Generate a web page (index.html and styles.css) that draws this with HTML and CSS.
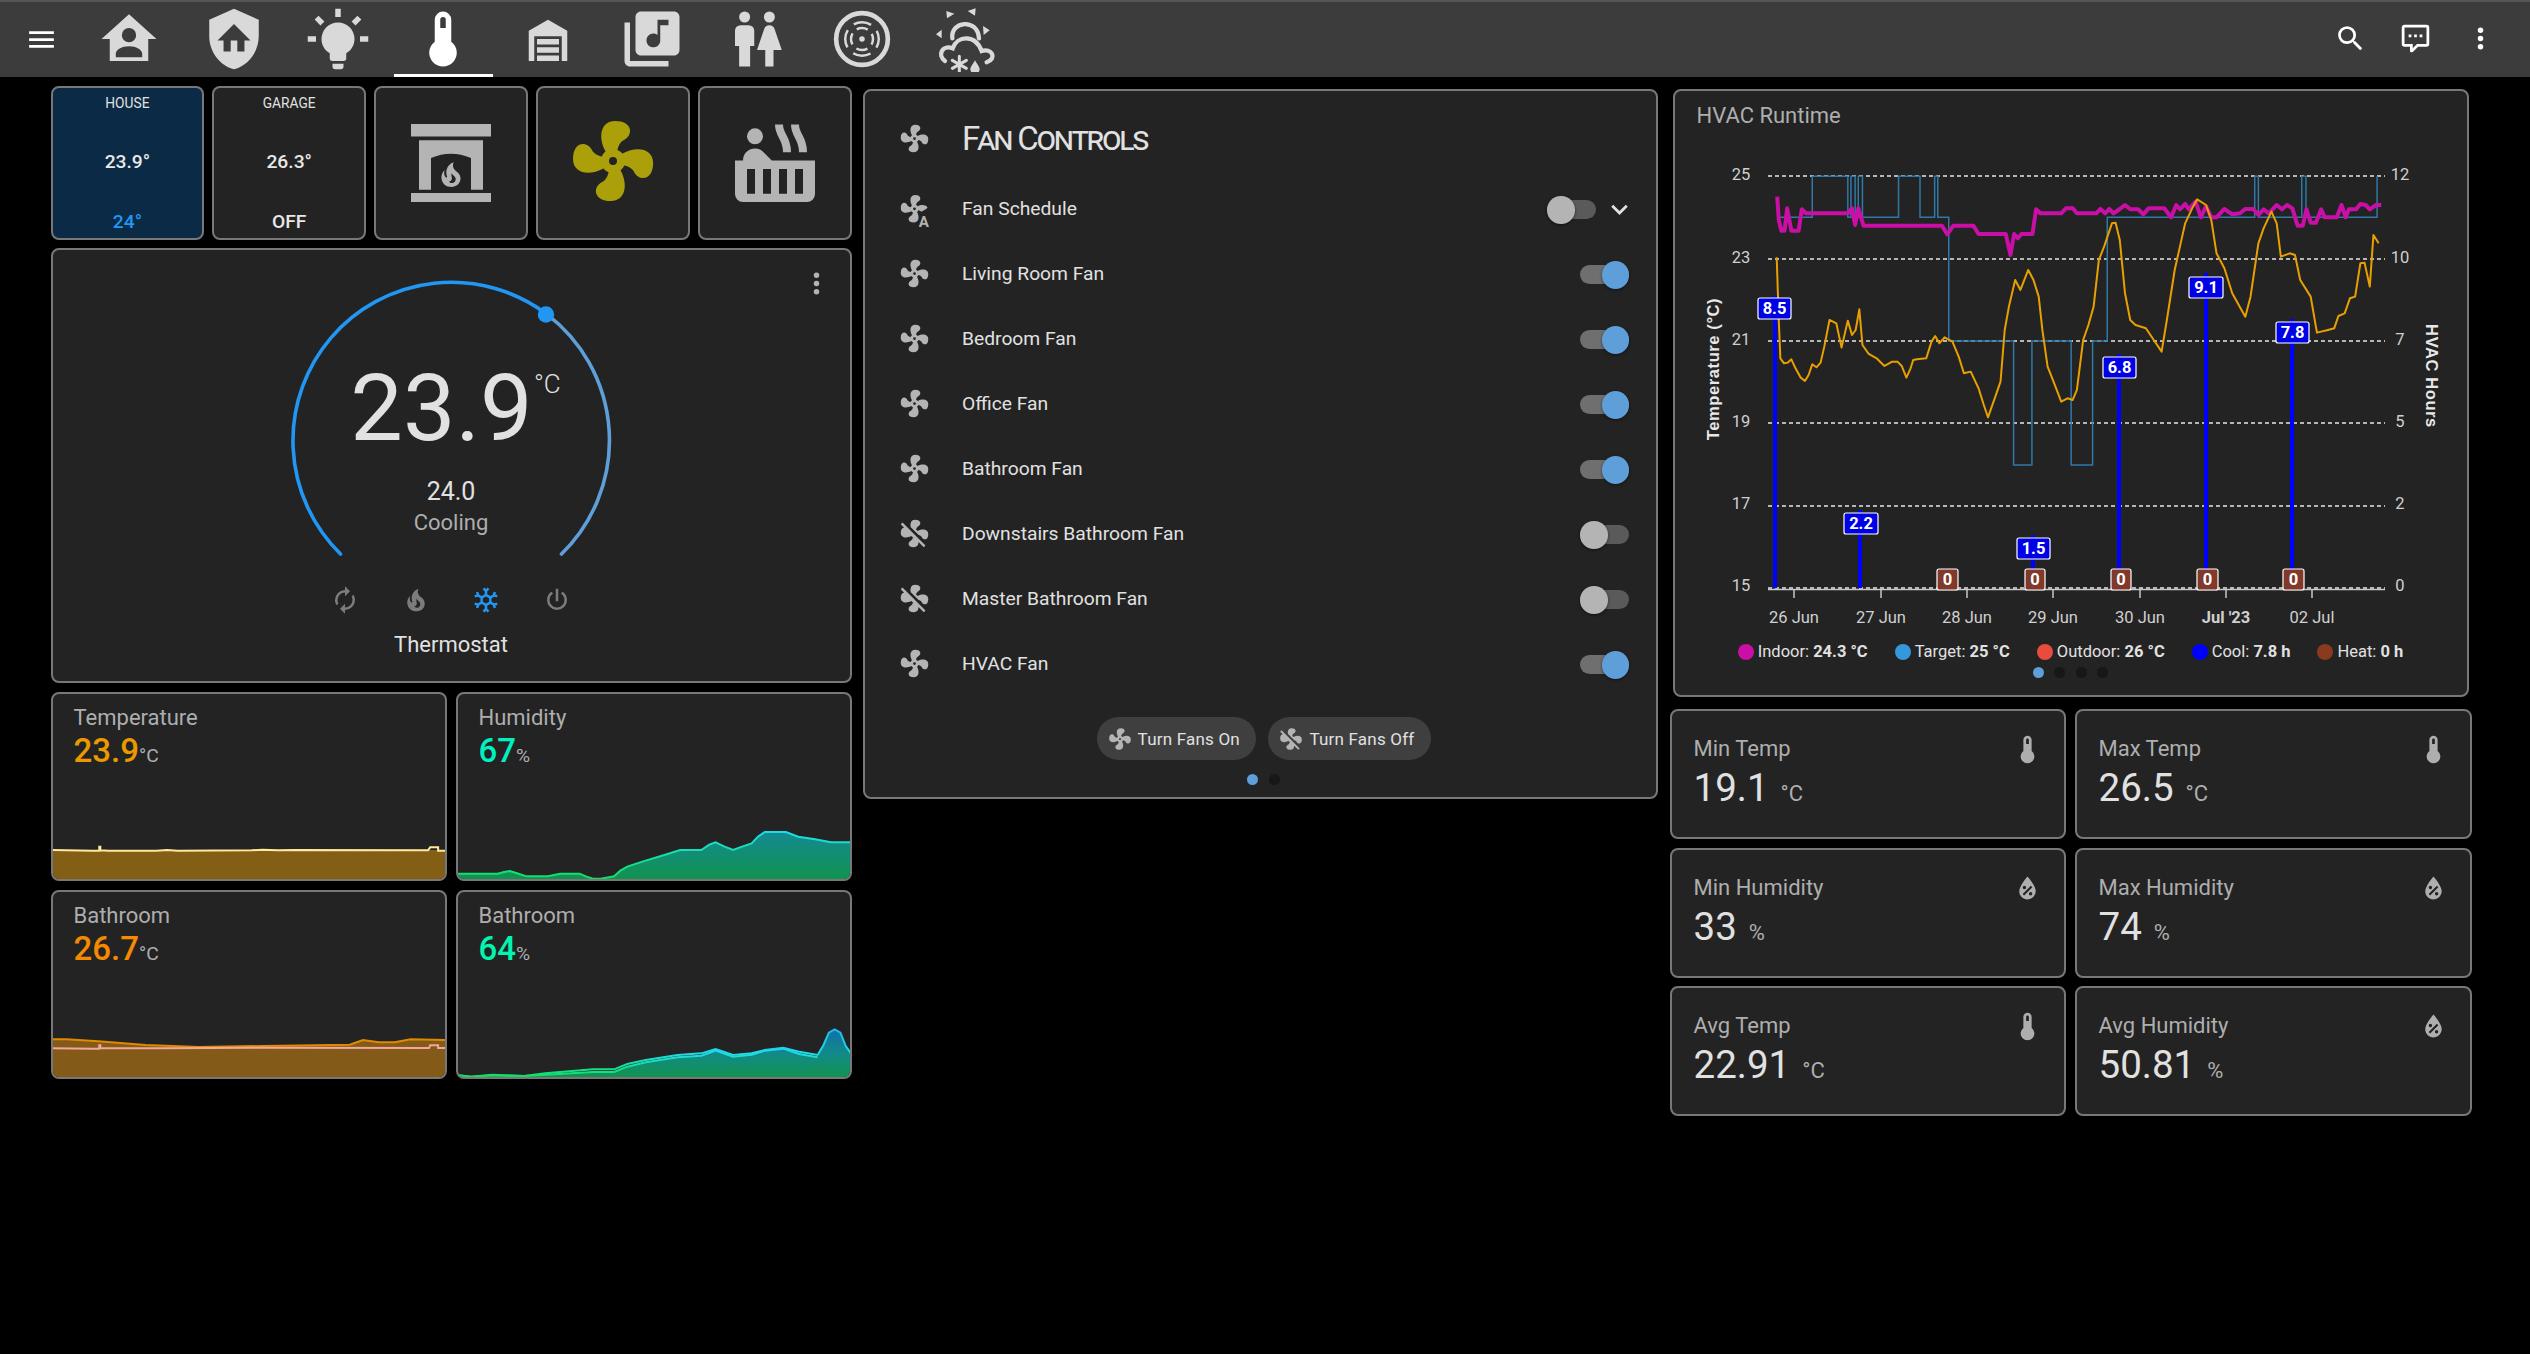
FILE: index.html
```html
<!DOCTYPE html>
<html lang="en">
<head>
  <meta charset="UTF-8">
  <title>Climate</title>
  <link rel="stylesheet" href="styles.css">
</head>
<body>

<!-- icon set -->
<svg class="defs" width="0" height="0">
  <symbol id="i-menu" viewBox="0 0 24 24"><path d="M3,6H21V8H3V6M3,11H21V13H3V11M3,16H21V18H3V16Z"/></symbol>
  <symbol id="i-home" viewBox="0 0 24 24"><path fill-rule="evenodd" d="M12,3L2,12H5V20H19V12H22L12,3M12,8A2.6,2.6 0 0,1 14.6,10.6A2.6,2.6 0 0,1 12,13.2A2.6,2.6 0 0,1 9.4,10.6A2.6,2.6 0 0,1 12,8M12,14.6C14.6,14.6 16.8,15.8 16.8,17.4V18.6H7.2V17.4C7.2,15.8 9.4,14.6 12,14.6Z"/></symbol>
  <symbol id="i-shield" viewBox="0 0 24 24"><path fill-rule="evenodd" d="M12,1L3,5V11C3,16.55 6.84,21.74 12,23C17.16,21.74 21,16.55 21,11V5L12,1M12,6.5L18,12.5H15.8V16.5H13.2V12.5H10.8V16.5H8.2V12.5H6L12,6.5Z"/></symbol>
  <symbol id="i-bulb" viewBox="0 0 24 24"><path d="M12,6A6,6 0 0,1 18,12C18,14.22 16.79,16.16 15,17.2V19A1,1 0 0,1 14,20H10A1,1 0 0,1 9,19V17.2C7.21,16.16 6,14.22 6,12A6,6 0 0,1 12,6M14,21V22A1,1 0 0,1 13,23H11A1,1 0 0,1 10,22V21H14M20,11H23V13H20V11M1,11H4V13H1V11M13,1V4H11V1H13M4.92,3.5L7.05,5.64L5.63,7.05L3.5,4.93L4.92,3.5M16.95,5.63L19.07,3.5L20.5,4.93L18.37,7.05L16.95,5.63Z"/></symbol>
  <symbol id="i-thermo" viewBox="0 0 24 24"><path fill-rule="evenodd" d="M15 13V5A3 3 0 0 0 9 5V13A5 5 0 1 0 15 13M12 4A1 1 0 0 1 13 5V8H11V5A1 1 0 0 1 12 4Z"/></symbol>
  <symbol id="i-garage" viewBox="0 0 24 24"><path d="M19,20H17V11H7V20H5V9L12,5L19,9V20M8,12H16V14H8V12M8,15H16V17H8V15M16,18V20H8V18H16Z"/></symbol>
  <symbol id="i-music" viewBox="0 0 24 24"><path d="M20 2H8C6.9 2 6 2.9 6 4V16C6 17.1 6.9 18 8 18H20C21.1 18 22 17.1 22 16V4C22 2.9 21.1 2 20 2M18 7H15V12.5C15 13.9 13.9 15 12.5 15S10 13.9 10 12.5 11.1 10 12.5 10C13.1 10 13.6 10.2 14 10.5V5H18V7M4 6H2V20C2 21.1 2.9 22 4 22H18V20H4V6Z"/></symbol>
  <symbol id="i-people" viewBox="0 0 24 24"><path d="M7.5,2A2,2 0 0,1 9.5,4A2,2 0 0,1 7.5,6A2,2 0 0,1 5.5,4A2,2 0 0,1 7.5,2M6,7H9A2,2 0 0,1 11,9V14.5H9.5V22H5.5V14.5H4V9A2,2 0 0,1 6,7M16.5,2A2,2 0 0,1 18.5,4A2,2 0 0,1 16.5,6A2,2 0 0,1 14.5,4A2,2 0 0,1 16.5,2M15,22V16H12L14.59,8.41C14.84,7.59 15.6,7 16.5,7C17.4,7 18.16,7.59 18.41,8.41L21,16H18V22H15Z"/></symbol>
  <symbol id="i-vacuum" viewBox="0 0 24 24">
    <g fill="none" stroke="currentColor">
      <circle cx="12" cy="12" r="9.4" stroke-width="1.7"/>
      <circle cx="12" cy="12" r="6.1" stroke-width=".9" stroke-dasharray="6.6 2.98" stroke-dashoffset="3.3"/>
      <circle cx="12" cy="12" r="4" stroke-width=".9" stroke-dasharray="4.2 2.08" stroke-dashoffset="2.1"/>
    </g>
    <circle cx="12" cy="12" r="1"/>
  </symbol>
  <symbol id="i-weather" viewBox="336 15 198 198">
    <g fill="none" stroke="currentColor" stroke-width="13" stroke-linecap="round">
      <path d="M394,112C388,60 470,50 474,112"/>
      <path d="M372,180C348,162 364,130 395,142C408,104 462,98 482,150C512,140 530,172 497,184"/>
    </g>
    <g fill="none" stroke="currentColor" stroke-width="9" stroke-linecap="round">
      <path d="M415,166V214M394,178L436,202M394,202L436,178"/>
    </g>
    <path d="M376,30L400,38L378,52ZM440,30L464,22L462,44ZM486,75L506,88L488,102ZM345,100L362,86L362,112Z"/>
    <path d="M462,178C470,192 476,198 476,205A14,13 0 0,1 448,205C448,198 454,192 462,178Z"/>
  </symbol>
  <symbol id="i-search" viewBox="0 0 24 24"><path d="M9.5,3A6.5,6.5 0 0,1 16,9.5C16,11.11 15.41,12.59 14.44,13.73L14.71,14H15.5L20.5,19L19,20.5L14,15.5V14.71L13.73,14.44C12.59,15.41 11.11,16 9.5,16A6.5,6.5 0 0,1 3,9.5A6.5,6.5 0 0,1 9.5,3M9.5,5C7,5 5,7 5,9.5C5,12 7,14 9.5,14C12,14 14,12 14,9.5C14,7 12,5 9.5,5Z"/></symbol>
  <symbol id="i-chat" viewBox="0 0 24 24"><path d="M9,22A1,1 0 0,1 8,21V18H4A2,2 0 0,1 2,16V4C2,2.89 2.9,2 4,2H20A2,2 0 0,1 22,4V16A2,2 0 0,1 20,18H13.9L10.2,21.71C10,21.9 9.75,22 9.5,22V22H9M10,16V19.08L13.08,16H20V4H4V16H10M17,11H15V9H17V11M13,11H11V9H13V11M9,11H7V9H9V11Z"/></symbol>
  <symbol id="i-dots" viewBox="0 0 24 24"><path d="M12,16A2,2 0 0,1 14,18A2,2 0 0,1 12,20A2,2 0 0,1 10,18A2,2 0 0,1 12,16M12,10A2,2 0 0,1 14,12A2,2 0 0,1 12,14A2,2 0 0,1 10,12A2,2 0 0,1 12,10M12,4A2,2 0 0,1 14,6A2,2 0 0,1 12,8A2,2 0 0,1 10,6A2,2 0 0,1 12,4Z"/></symbol>
  <symbol id="i-fan" viewBox="0 0 24 24"><path fill-rule="evenodd" d="M12,11A1,1 0 0,0 11,12A1,1 0 0,0 12,13A1,1 0 0,0 13,12A1,1 0 0,0 12,11M12.5,2C17,2 17.11,5.57 14.75,6.75C13.76,7.24 13.32,8.29 13.13,9.22C13.61,9.42 14.03,9.73 14.35,10.13C18.05,8.13 22.03,8.92 22.03,12.5C22.03,17 18.46,17.1 17.28,14.73C16.78,13.74 15.72,13.3 14.79,13.11C14.59,13.59 14.28,14 13.88,14.34C15.87,18.03 15.08,22 11.5,22C7,22 6.91,18.42 9.27,17.24C10.25,16.75 10.69,15.71 10.89,14.79C10.4,14.59 9.97,14.27 9.65,13.87C5.96,15.85 2,15.07 2,11.5C2,7 5.56,6.89 6.74,9.26C7.24,10.25 8.29,10.68 9.22,10.88C9.41,10.39 9.73,9.97 10.14,9.65C8.15,5.96 8.94,2 12.5,2Z"/></symbol>
  <symbol id="i-fan-off" viewBox="0 0 24 24"><path d="M12.5,2C9.64,2 8.57,4.55 9.29,7.47L15,13.16C15.87,13.37 16.81,13.81 17.28,14.73C18.46,17.1 22.03,17 22.03,12.5C22.03,8.92 18.05,8.13 14.35,10.13C14.03,9.73 13.61,9.42 13.13,9.22C13.32,8.29 13.76,7.24 14.75,6.75C17.11,5.57 17,2 12.5,2M3.28,4L2,5.27L4.47,7.73C3.22,7.74 2,8.87 2,11.5C2,15.07 5.96,15.85 9.65,13.87C9.97,14.27 10.4,14.59 10.89,14.79C10.69,15.71 10.25,16.75 9.27,17.24C6.91,18.42 7,22 11.5,22C13.8,22 14.94,20.36 14.94,18.21L18.73,22L20,20.72L3.28,4Z"/></symbol>
  <symbol id="i-fan-auto" viewBox="0 0 24 24"><path fill-rule="evenodd" d="M12,9A1,1 0 0,0 11,10A1,1 0 0,0 12,11A1,1 0 0,0 13,10A1,1 0 0,0 12,9M12.5,0C17,0 17.11,3.57 14.75,4.75C13.76,5.24 13.32,6.29 13.13,7.22C13.61,7.42 14.03,7.73 14.35,8.13C16.5,7 20,6.8 21.5,9C20.5,10.5 18,11.5 17,12.2C16.5,11.6 15.72,11.3 14.79,11.11C14.59,11.59 14.28,12 13.88,12.34C15.87,16.03 15.08,20 11.5,20C7,20 6.91,16.42 9.27,15.24C10.25,14.75 10.69,13.71 10.89,12.79C10.4,12.59 9.97,12.27 9.65,11.87C5.96,13.85 2,13.07 2,9.5C2,5 5.56,4.89 6.74,7.26C7.24,8.25 8.29,8.68 9.22,8.88C9.41,8.39 9.73,7.97 10.14,7.65C8.15,3.96 8.94,0 12.5,0Z"/></symbol>
  <symbol id="i-water" viewBox="0 0 24 24"><path fill-rule="evenodd" d="M12,3.25C12,3.25 6,10 6,14C6,17.32 8.69,20 12,20A6,6 0 0,0 18,14C18,10 12,3.25 12,3.25M14.47,9.97L15.53,11.03L9.53,17.03L8.47,15.97L14.47,9.97M9.75,10A1.25,1.25 0 0,1 11,11.25A1.25,1.25 0 0,1 9.75,12.5A1.25,1.25 0 0,1 8.5,11.25A1.25,1.25 0 0,1 9.75,10M14.25,14.5A1.25,1.25 0 0,1 15.5,15.75A1.25,1.25 0 0,1 14.25,17A1.25,1.25 0 0,1 13,15.75A1.25,1.25 0 0,1 14.25,14.5Z"/></symbol>
  <symbol id="i-chevron" viewBox="0 0 24 24"><path d="M7.41,8.58L12,13.17L16.59,8.58L18,10L12,16L6,10L7.41,8.58Z"/></symbol>
  <symbol id="i-auto" viewBox="0 0 24 24"><path d="M12,6V9L16,5L12,1V4A8,8 0 0,0 4,12C4,13.57 4.46,15.03 5.24,16.26L6.7,14.8C6.25,13.97 6,13 6,12A6,6 0 0,1 12,6M18.76,7.74L17.3,9.2C17.74,10.04 18,11 18,12A6,6 0 0,1 12,18V15L8,19L12,23V20A8,8 0 0,0 20,12C20,10.43 19.54,8.97 18.76,7.74Z"/></symbol>
  <symbol id="i-fire" viewBox="0 0 24 24"><path fill-rule="evenodd" d="M17.66 11.2C17.43 10.9 17.15 10.64 16.89 10.38C16.22 9.78 15.46 9.35 14.82 8.72C13.33 7.26 13 4.85 13.95 3C13 3.23 12.17 3.75 11.46 4.32C8.87 6.4 7.85 10.07 9.07 13.22C9.11 13.32 9.15 13.42 9.15 13.55C9.15 13.77 9 13.97 8.8 14.05C8.57 14.15 8.33 14.09 8.14 13.93C8.08 13.88 8.04 13.83 8 13.76C6.87 12.33 6.69 10.28 7.45 8.64C5.78 10 4.87 12.3 5 14.47C5.06 14.97 5.12 15.47 5.29 15.97C5.43 16.57 5.7 17.17 6 17.7C7.08 19.43 8.95 20.67 10.96 20.92C13.1 21.19 15.39 20.8 17.03 19.32C18.86 17.66 19.5 15 18.56 12.72L18.43 12.46C18.22 12 17.66 11.2 17.66 11.2M14.5 17.5C14.22 17.74 13.76 18 13.4 18.1C12.28 18.5 11.16 17.94 10.5 17.28C11.69 17 12.4 16.12 12.61 15.23C12.78 14.43 12.46 13.77 12.33 13C12.21 12.26 12.23 11.63 12.5 10.94C12.69 11.32 12.89 11.7 13.13 12C13.9 13 15.11 13.44 15.37 14.8C15.41 14.94 15.43 15.08 15.43 15.23C15.46 16.05 15.1 16.95 14.5 17.5H14.5Z"/></symbol>
  <symbol id="i-snow" viewBox="0 0 24 24"><path fill-rule="evenodd" d="M20.79,13.95L18.46,14.57L16.46,13.44V10.56L18.46,9.43L20.79,10.05L21.31,8.12L19.54,7.65L20,5.88L18.07,5.36L17.45,7.69L15.45,8.82L13,7.38V5.12L14.71,3.41L13.29,2L12,3.29L10.71,2L9.29,3.41L11,5.12V7.38L8.5,8.82L6.5,7.69L5.92,5.36L4,5.88L4.47,7.65L2.7,8.12L3.22,10.05L5.55,9.43L7.55,10.56V13.45L5.55,14.58L3.22,13.96L2.7,15.89L4.47,16.36L4,18.12L5.93,18.64L6.55,16.31L8.55,15.18L11,16.62V18.88L9.29,20.59L10.71,22L12,20.71L13.29,22L14.7,20.59L13,18.88V16.62L15.5,15.17L17.5,16.3L18.12,18.63L20,18.12L19.53,16.35L21.3,15.88L20.79,13.95M9.5,10.56L12,9.11L14.5,10.56V13.44L12,14.89L9.5,13.44V10.56Z"/></symbol>
  <symbol id="i-power" viewBox="0 0 24 24"><path d="M16.56,5.44L15.11,6.89C16.84,7.94 18,9.83 18,12A6,6 0 0,1 12,18A6,6 0 0,1 6,12C6,9.83 7.16,7.94 8.88,6.88L7.44,5.44C5.36,6.88 4,9.28 4,12A8,8 0 0,0 12,20A8,8 0 0,0 20,12C20,9.28 18.64,6.88 16.56,5.44M13,3H11V13H13"/></symbol>
  <symbol id="i-fireplace" viewBox="0 0 24 24">
    <path fill-rule="evenodd" d="M2,2.25H22V5.4H2ZM4,6.3H20V18.7H17V10.75Q12,8.6 7,10.75V18.7H4ZM2,19.5H22V21.75H2Z"/>
    <use href="#i-fire" x="7.9" y="9.9" width="8.2" height="10"/>
  </symbol>
  <symbol id="i-tub" viewBox="0 0 24 24">
    <circle cx="7" cy="5.33" r="2"/>
    <path fill-rule="evenodd" d="M4,11.4C4,9.5 5.5,8.4 7,8.4C8,8.4 8.6,8.8 9.2,9.4L11.2,11.4H22V19.75A2,2 0 0,1 20,21.75H4A2,2 0 0,1 2,19.75V11.4ZM5,13.5V19.7H7V13.5ZM9,13.5V19.7H11V13.5ZM13,13.5V19.7H15V13.5ZM17,13.5V19.7H19V13.5Z"/>
    <path fill="none" stroke="currentColor" stroke-width="2" d="M13,2.4C13,5.2 15,5.6 15,9.3M17,2.4C17,5.2 19,5.6 19,9.3"/>
  </symbol>
</svg>

<header class="topbar">
  <button class="bar-btn menu-btn"><svg class="ic"><use href="#i-menu"/></svg></button>
  <nav class="tabs">
    <a class="tab"><svg><use href="#i-home"/></svg></a>
    <a class="tab"><svg><use href="#i-shield"/></svg></a>
    <a class="tab"><svg><use href="#i-bulb"/></svg></a>
    <a class="tab active"><svg><use href="#i-thermo"/></svg></a>
    <a class="tab"><svg><use href="#i-garage"/></svg></a>
    <a class="tab"><svg><use href="#i-music"/></svg></a>
    <a class="tab"><svg><use href="#i-people"/></svg></a>
    <a class="tab"><svg><use href="#i-vacuum"/></svg></a>
    <a class="tab"><svg><use href="#i-weather"/></svg></a>
  </nav>
  <div class="bar-actions">
    <button class="bar-btn"><svg class="ic"><use href="#i-search"/></svg></button>
    <button class="bar-btn"><svg class="ic"><use href="#i-chat"/></svg></button>
    <button class="bar-btn"><svg class="ic"><use href="#i-dots"/></svg></button>
  </div>
</header>

<main class="board">

  <!-- left column -->
  <section class="col col-left">
    <div class="quick-row">
      <div class="card quick quick-temp house">
        <span class="q-label">HOUSE</span><span class="q-val">23.9°</span><span class="q-set blue">24°</span>
      </div>
      <div class="card quick quick-temp">
        <span class="q-label">GARAGE</span><span class="q-val">26.3°</span><span class="q-set">OFF</span>
      </div>
      <div class="card quick quick-icon"><svg><use href="#i-fireplace"/></svg></div>
      <div class="card quick quick-icon fan-on"><svg><use href="#i-fan"/></svg></div>
      <div class="card quick quick-icon"><svg><use href="#i-tub"/></svg></div>
    </div>

    <div class="card thermostat">
      <svg class="ic more"><use href="#i-dots"/></svg>
      <svg class="dial" width="400" height="300" viewBox="251 270 400 300">
        <path class="dial-on" d="M340.5,554A158.5,158.5 0 0 1 546.4,313.9"/>
        <path class="dial-off" d="M546.4,313.9A158.5,158.5 0 0 1 561.5,554"/>
        <circle cx="546" cy="314.5" r="8.2" fill="#2196f3"/>
        <text class="dial-temp" x="441.5" y="440">23.9</text>
        <text class="dial-unit" x="534" y="393">°C</text>
        <text class="dial-set" x="451" y="500">24.0</text>
        <text class="dial-state" x="451" y="530">Cooling</text>
      </svg>
      <div class="modes">
        <svg class="mode"><use href="#i-auto"/></svg>
        <svg class="mode"><use href="#i-fire"/></svg>
        <svg class="mode on"><use href="#i-snow"/></svg>
        <svg class="mode"><use href="#i-power"/></svg>
      </div>
      <div class="thermo-name">Thermostat</div>
    </div>

    <div class="spark-grid">
      <div class="card spark">
        <div class="card-title">Temperature</div>
        <div class="spark-val"><b class="c-temp1">23.9</b><span>°C</span></div>
        <svg class="spark-line" viewBox="24.6 420 740.4 177" preserveAspectRatio="none">
          <polygon fill="#835f16" points="23,510 765,510 765,597 23,597"/>
          <polyline class="ln" stroke="#ffe9a0" points="23,510 100,512 112,512 112,500 114,500 114,511 130,512 220,512 240,510 260,512 400,511 420,509 450,511 480,510 733,511 737,502 752,502 752,512 765,512"/>
        </svg>
      </div>
      <div class="card spark">
        <div class="card-title">Humidity</div>
        <div class="spark-val"><b class="c-hum1">67</b><span>%</span></div>
        <svg class="spark-line" viewBox="785 420 742 177" preserveAspectRatio="none">
          <defs>
            <linearGradient id="humFill" gradientUnits="userSpaceOnUse" x1="0" y1="456" x2="0" y2="597"><stop offset="0" stop-color="#128a92"/><stop offset="1" stop-color="#129250"/></linearGradient>
            <linearGradient id="humLine" gradientUnits="userSpaceOnUse" x1="0" y1="456" x2="0" y2="597"><stop offset="0" stop-color="#1edce8"/><stop offset="1" stop-color="#10e060"/></linearGradient>
          </defs>
          <polygon fill="url(#humFill)" points="785,581 860,581 872,576 883,573 895,579 915,589 955,589 978,581 1015,581 1028,590 1040,596 1055,596 1080,589 1092,572 1105,560 1135,544 1175,525 1205,510 1245,510 1260,494 1272,487 1288,499 1305,510 1322,500 1340,490 1352,470 1365,456 1405,456 1428,470 1460,478 1490,487 1530,487 1530,597 785,597"/>
          <polyline class="ln" stroke="url(#humLine)" points="785,581 860,581 872,576 883,573 895,579 915,589 955,589 978,581 1015,581 1028,590 1040,596 1055,596 1080,589 1092,572 1105,560 1135,544 1175,525 1205,510 1245,510 1260,494 1272,487 1288,499 1305,510 1322,500 1340,490 1352,470 1365,456 1405,456 1428,470 1460,478 1490,487 1530,487"/>
        </svg>
      </div>
      <div class="card spark">
        <div class="card-title">Bathroom</div>
        <div class="spark-val"><b class="c-temp2">26.7</b><span>°C</span></div>
        <svg class="spark-line" viewBox="24.6 1014 740.4 177" preserveAspectRatio="none">
          <polygon fill="#835a18" points="23,1078 50,1078 110,1084 200,1095 300,1101 420,1098 585,1094 610,1080 640,1087 670,1087 700,1078 765,1080 765,1191 23,1191"/>
          <polyline class="ln" stroke="#e08a00" points="23,1078 50,1078 110,1084 200,1095 300,1101 420,1098 585,1094 610,1080 640,1087 670,1087 700,1078 765,1080"/>
          <polyline class="ln" stroke="#f2a79a" points="23,1105 100,1106 112,1106 112,1096 114,1096 114,1105 230,1105 420,1103 735,1104 737,1096 752,1096 752,1104 765,1104"/>
        </svg>
      </div>
      <div class="card spark">
        <div class="card-title">Bathroom</div>
        <div class="spark-val"><b class="c-hum2">64</b><span>%</span></div>
        <svg class="spark-line" viewBox="785 1014 742 177" preserveAspectRatio="none">
          <defs>
            <linearGradient id="bathFill" gradientUnits="userSpaceOnUse" x1="0" y1="1048" x2="0" y2="1191"><stop offset="0" stop-color="#1070a8"/><stop offset=".5" stop-color="#128a8a"/><stop offset="1" stop-color="#129250"/></linearGradient>
            <linearGradient id="bathLine" gradientUnits="userSpaceOnUse" x1="0" y1="1048" x2="0" y2="1191"><stop offset="0" stop-color="#20b8f0"/><stop offset=".5" stop-color="#1edce8"/><stop offset="1" stop-color="#10e060"/></linearGradient>
          </defs>
          <polygon fill="url(#bathFill)" points="785,1186 810,1190 850,1186 910,1188 950,1184 1040,1176 1080,1176 1105,1160 1140,1147 1200,1132 1245,1127 1272,1112 1305,1130 1340,1124 1365,1112 1400,1106 1430,1122 1465,1132 1476,1095 1486,1058 1497,1048 1508,1058 1518,1098 1530,1125 1530,1191 785,1191"/>
          <polyline class="ln" stroke="url(#bathLine)" points="785,1186 810,1190 850,1184 910,1188 950,1180 1040,1168 1080,1168 1105,1152 1140,1140 1200,1125 1245,1120 1272,1107 1305,1125 1340,1120 1365,1110 1400,1103 1430,1115 1465,1125 1476,1095 1486,1058 1497,1048 1508,1058 1518,1098 1530,1125"/>
          <polyline class="ln" stroke="url(#bathLine)" points="785,1186 810,1190 850,1186 910,1188 950,1184 1040,1176 1080,1176 1105,1160 1140,1147 1200,1132 1245,1127 1272,1112 1305,1130 1340,1124 1365,1112 1400,1106 1430,1122 1465,1132"/>
        </svg>
      </div>
    </div>
  </section>

  <!-- middle column -->
  <section class="col col-mid">
    <div class="card fans">
      <div class="fan-head">
        <svg class="ic"><use href="#i-fan"/></svg>
        <span>Fan Controls</span>
      </div>
      <div class="fan-row">
        <svg class="ic fan-auto" viewBox="0 0 24 24"><use href="#i-fan-auto" width="24" height="24"/><text x="18.8" y="23" class="fan-a">A</text></svg>
        <span class="fan-name">Fan Schedule</span>
        <div class="toggle"><i></i></div>
        <svg class="ic chevron"><use href="#i-chevron"/></svg>
      </div>
      <div class="fan-row"><svg class="ic"><use href="#i-fan"/></svg><span class="fan-name">Living Room Fan</span><div class="toggle on"><i></i></div></div>
      <div class="fan-row"><svg class="ic"><use href="#i-fan"/></svg><span class="fan-name">Bedroom Fan</span><div class="toggle on"><i></i></div></div>
      <div class="fan-row"><svg class="ic"><use href="#i-fan"/></svg><span class="fan-name">Office Fan</span><div class="toggle on"><i></i></div></div>
      <div class="fan-row"><svg class="ic"><use href="#i-fan"/></svg><span class="fan-name">Bathroom Fan</span><div class="toggle on"><i></i></div></div>
      <div class="fan-row"><svg class="ic"><use href="#i-fan-off"/></svg><span class="fan-name">Downstairs Bathroom Fan</span><div class="toggle"><i></i></div></div>
      <div class="fan-row"><svg class="ic"><use href="#i-fan-off"/></svg><span class="fan-name">Master Bathroom Fan</span><div class="toggle"><i></i></div></div>
      <div class="fan-row"><svg class="ic"><use href="#i-fan"/></svg><span class="fan-name">HVAC Fan</span><div class="toggle on"><i></i></div></div>
      <div class="fan-btns">
        <button class="pill"><svg><use href="#i-fan"/></svg>Turn Fans On</button>
        <button class="pill"><svg><use href="#i-fan-off"/></svg>Turn Fans Off</button>
      </div>
      <div class="pager"><i class="cur"></i><i></i></div>
    </div>
  </section>

  <!-- right column -->
  <section class="col col-right">
    <div class="card runtime">
      <div class="card-title">HVAC Runtime</div>
      <svg class="chart" width="792" height="492" viewBox="1675 140 792 492">
        <g class="grid">
          <line x1="1768" x2="2385" y1="176" y2="176"/>
          <line x1="1768" x2="2385" y1="259" y2="259"/>
          <line x1="1768" x2="2385" y1="341" y2="341"/>
          <line x1="1768" x2="2385" y1="423" y2="423"/>
          <line x1="1768" x2="2385" y1="506" y2="506"/>
          <line x1="1768" x2="2385" y1="588" y2="588"/>
        </g>
        <line class="axis" x1="1768" x2="2385" y1="589.5" y2="589.5"/>
        <path class="axis" d="M1794,589V598M1881,589V598M1967,589V598M2053,589V598M2140,589V598M2226,589V598M2312,589V598"/>

        <g class="bars">
          <line x1="1775" x2="1775" y1="296" y2="588"/>
          <line x1="1860" x2="1860" y1="510" y2="588"/>
          <line x1="2033" x2="2033" y1="535" y2="588"/>
          <line x1="2119" x2="2119" y1="354" y2="588"/>
          <line x1="2206" x2="2206" y1="273" y2="588"/>
          <line x1="2292" x2="2292" y1="319" y2="588"/>
        </g>

        <g transform="translate(1670 80) scale(.523 .3333)">
          <polyline class="ln target" points="205,412 272,412 272,289 340,289 340,412 346,412 346,289 354,289 354,412 360,412 360,289 368,289 368,412 437,412 437,289 478,289 478,412 506,412 506,289 512,289 512,412 533,412 533,783 657,783 657,1155 692,1155 692,783 767,783 767,1155 808,1155 808,783 836,783 836,412 1118,412 1118,289 1125,289 1125,412 1208,412 1208,289 1216,289 1216,412 1352,412 1352,289"/>
          <polyline class="ln indoor" points="205,350 208,420 213,452 219,452 224,385 232,452 246,452 252,388 260,400 340,400 348,385 354,435 360,385 370,437 520,437 530,463 542,437 580,437 590,462 642,462 651,525 658,462 665,475 672,462 693,462 700,388 708,400 748,400 757,385 770,385 778,400 815,400 823,387 832,400 840,387 848,400 860,387 870,375 880,388 895,388 905,403 915,385 945,385 958,412 968,375 975,388 985,372 992,388 1005,365 1015,412 1025,378 1035,412 1045,412 1060,387 1075,403 1090,400 1100,387 1115,387 1125,405 1135,388 1145,400 1160,375 1170,388 1180,375 1190,385 1200,437 1210,437 1217,388 1225,428 1235,428 1245,388 1252,412 1275,412 1284,375 1292,412 1298,388 1312,388 1320,372 1330,375 1338,388 1350,375 1360,375"/>
          <polyline class="ln outdoor" points="204,532 208,720 211,835 218,850 225,848 232,838 240,865 250,893 258,903 265,885 272,853 280,862 288,848 295,800 305,720 318,730 328,803 340,722 348,765 355,750 362,688 368,795 380,822 395,835 410,858 425,845 435,845 443,858 452,893 460,865 465,840 472,838 490,835 500,785 507,768 515,790 525,772 540,785 552,830 562,880 575,875 590,925 600,975 608,1012 622,950 632,905 640,750 648,680 660,600 670,630 685,570 695,600 705,650 712,750 722,860 735,912 748,965 760,955 770,960 778,930 790,780 800,735 810,680 820,540 830,500 845,430 852,428 860,480 870,640 880,720 890,735 910,745 925,780 940,815 950,720 965,570 975,500 985,430 1000,380 1008,358 1025,375 1035,420 1045,520 1060,565 1075,640 1100,710 1110,650 1125,490 1135,445 1150,395 1160,430 1168,530 1185,520 1195,525 1205,600 1225,650 1237,758 1245,755 1258,750 1270,745 1278,708 1290,700 1300,655 1310,650 1320,550 1328,548 1338,620 1345,465 1355,490"/>
        </g>

        <g class="tick-l">
          <text x="1741" y="180">25</text><text x="1741" y="263">23</text><text x="1741" y="345">21</text>
          <text x="1741" y="427">19</text><text x="1741" y="509">17</text><text x="1741" y="591">15</text>
        </g>
        <g class="tick-l">
          <text x="2400" y="180">12</text><text x="2400" y="263">10</text><text x="2400" y="345">7</text>
          <text x="2400" y="427">5</text><text x="2400" y="509">2</text><text x="2400" y="591">0</text>
        </g>
        <g class="tick-l">
          <text x="1794" y="623">26 Jun</text><text x="1881" y="623">27 Jun</text><text x="1967" y="623">28 Jun</text>
          <text x="2053" y="623">29 Jun</text><text x="2140" y="623">30 Jun</text><text class="strong" x="2226" y="623">Jul '23</text>
          <text x="2312" y="623">02 Jul</text>
        </g>
        <text class="ax-title" transform="translate(1719 369) rotate(-90)">Temperature (°C)</text>
        <text class="ax-title" transform="translate(2426 376) rotate(90)">HVAC Hours</text>

        <g class="tag cool">
          <rect x="1758" y="298" width="33" height="21" rx="2"/><text x="1774.5" y="314">8.5</text>
          <rect x="1844" y="513" width="34" height="21" rx="2"/><text x="1861" y="529">2.2</text>
          <rect x="2017" y="538" width="33" height="21" rx="2"/><text x="2033.5" y="554">1.5</text>
          <rect x="2103" y="357" width="33" height="21" rx="2"/><text x="2119.5" y="373">6.8</text>
          <rect x="2189" y="277" width="34" height="21" rx="2"/><text x="2206" y="293">9.1</text>
          <rect x="2276" y="322" width="33" height="21" rx="2"/><text x="2292.5" y="338">7.8</text>
        </g>
        <g class="tag heat">
          <rect x="1937" y="569" width="21" height="21" rx="2"/><text x="1947.5" y="585">0</text>
          <rect x="2025" y="569" width="20" height="21" rx="2"/><text x="2035" y="585">0</text>
          <rect x="2111" y="569" width="20" height="21" rx="2"/><text x="2121" y="585">0</text>
          <rect x="2197" y="569" width="21" height="21" rx="2"/><text x="2207.5" y="585">0</text>
          <rect x="2283" y="569" width="21" height="21" rx="2"/><text x="2293.5" y="585">0</text>
        </g>
      </svg>
      <div class="legend">
        <span class="lg"><i class="sw s-indoor"></i>Indoor: <b>24.3 °C</b></span>
        <span class="lg"><i class="sw s-target"></i>Target: <b>25 °C</b></span>
        <span class="lg"><i class="sw s-outdoor"></i>Outdoor: <b>26 °C</b></span>
        <span class="lg"><i class="sw s-cool"></i>Cool: <b>7.8 h</b></span>
        <span class="lg"><i class="sw s-heat"></i>Heat: <b>0 h</b></span>
      </div>
      <div class="pager"><i class="cur"></i><i></i><i></i><i></i></div>
    </div>

    <div class="stats">
      <div class="card stat"><div><div class="card-title">Min Temp</div><div class="stat-val">19.1<span>°C</span></div></div><svg class="ic"><use href="#i-thermo"/></svg></div>
      <div class="card stat"><div><div class="card-title">Max Temp</div><div class="stat-val">26.5<span>°C</span></div></div><svg class="ic"><use href="#i-thermo"/></svg></div>
      <div class="card stat"><div><div class="card-title">Min Humidity</div><div class="stat-val">33<span>%</span></div></div><svg class="ic"><use href="#i-water"/></svg></div>
      <div class="card stat"><div><div class="card-title">Max Humidity</div><div class="stat-val">74<span>%</span></div></div><svg class="ic"><use href="#i-water"/></svg></div>
      <div class="card stat"><div><div class="card-title">Avg Temp</div><div class="stat-val">22.91<span>°C</span></div></div><svg class="ic"><use href="#i-thermo"/></svg></div>
      <div class="card stat"><div><div class="card-title">Avg Humidity</div><div class="stat-val">50.81<span>%</span></div></div><svg class="ic"><use href="#i-water"/></svg></div>
    </div>
  </section>

</main>

</body>
</html>
```

FILE: styles.css
```css
* { box-sizing: border-box; }
html, body { margin: 0; height: 100%; overflow: hidden; }
body { background: #000; color: #e1e1e1; font-family: Roboto, "Liberation Sans", sans-serif; font-size: 19.25px; }
svg { display: block; fill: currentColor; }
.defs { position: absolute; }
.ic { width: 33px; height: 33px; flex: none; }
.fan-a { font: 700 11px Roboto, sans-serif; text-anchor: middle; }
.ic.fan-auto { overflow: visible; margin-top: 7px; }

/* top bar */
.topbar { display: flex; align-items: center; height: 77px; background: #3c3c3c; border-top: 2px solid #565656; color: #fff; }
.bar-btn { width: 65px; height: 65px; padding: 0; border: none; background: none; color: inherit; display: flex; align-items: center; justify-content: center; }
.menu-btn { width: 66px; margin-left: 8px; margin-right: 2.6px; margin-top: -1px; }
.tabs { display: flex; flex: 1; height: 100%; }
.tab { width: 104.7px; height: 100%; display: flex; align-items: center; justify-content: center; color: #d9d9d9; padding-bottom: 1px; }
.tab svg { width: 66px; height: 66px; }
.tab.active { color: #fff; background: linear-gradient(#fff, #fff) no-repeat center bottom / 99px 3px; }
.bar-actions { display: flex; padding-right: 17px; margin-top: -2px; }

/* board */
.board { display: grid; grid-template-columns: 801px 795px 802px; column-gap: 11.5px; padding: 9px 0 0 50.5px; align-items: start; }
.col { display: flex; flex-direction: column; }
.col-mid, .col-right { margin-top: 3px; }
.card { background: #232323; border: 2px solid #787878; border-radius: 8px; overflow: hidden; }
.card-title { font-size: 22px; line-height: 26px; color: #aeaeae; }

/* quick buttons */
.quick-row { display: grid; grid-template-columns: repeat(5, 1fr); gap: 8px; }
.quick { height: 154px; }
.quick-temp { display: flex; flex-direction: column; align-items: center; justify-content: space-between; padding: 6px 0 5px; font-weight: 500; }
.quick-temp.house { background: #0b2a45; }
.q-label { font-size: 13.75px; line-height: 18px; font-weight: 400; }
.q-val, .q-set { font-size: 19.25px; line-height: 22px; color: #e8e8e8; }
.q-set.blue { color: #2196f3; }
.quick-icon { display: flex; align-items: center; justify-content: center; color: #b4b4b4; }
.quick-icon svg { width: 96px; height: 96px; }
.quick-icon.fan-on { color: #ab9f0a; padding-bottom: 4px; }

/* thermostat */
.thermostat { position: relative; height: 435px; margin-top: 8px; padding-top: 20px; display: flex; flex-direction: column; align-items: center; }
.more { position: absolute; top: 17px; right: 17px; color: #b4b4b4; }
.dial { overflow: visible; }
.dial path { fill: none; stroke-width: 3.6; stroke-linecap: round; }
.dial-on { stroke: #2196f3; }
.dial-off { stroke: #5e9fda; }
.dial text { text-anchor: middle; }
.dial-temp { font-size: 93.5px; fill: #e1e1e1; }
.dial text.dial-unit { font-size: 26px; font-weight: 300; text-anchor: start; fill: #e1e1e1; }
.dial-set { font-size: 25px; fill: #e1e1e1; }
.dial-state { font-size: 22px; fill: #aeaeae; }
.modes { display: flex; gap: 40.5px; margin-top: 15px; }
.mode { width: 30px; height: 30px; color: #7c7c7c; }
.mode.on { color: #2196f3; }
.thermo-name { font-size: 22px; line-height: 30px; margin-top: 15px; }

/* sensor sparklines */
.spark-grid { display: grid; grid-template-columns: 396px 396.5px; justify-content: space-between; gap: 9px; margin-top: 9px; }
.spark { height: 189px; display: flex; flex-direction: column; padding-top: 11px; }
.spark .card-title, .spark-val { padding-left: 21px; }
.spark-val { line-height: 40px; color: #aeaeae; font-size: 19.25px; }
.spark-val b { font-size: 33px; font-weight: 500; }
.c-temp1 { color: #e99a00; }
.c-temp2 { color: #f58a00; }
.c-hum1 { color: #00f0c0; }
.c-hum2 { color: #00f5ae; }
.spark-line { width: 100%; height: 59px; margin-top: auto; }
.ln { fill: none; stroke-width: 2; vector-effect: non-scaling-stroke; }

/* fan list */
.fans { height: 710px; padding: 15px 27px 0 32.5px; }
.fan-head { display: flex; align-items: center; gap: 31.5px; height: 65px; margin-bottom: 4.5px; color: #b4b4b4; }
.fan-head span { font-size: 33px; font-variant: small-caps; letter-spacing: -2.25px; color: #e1e1e1; line-height: 40px; font-weight: 400; }
.fan-row { display: flex; align-items: center; gap: 31.5px; height: 65px; color: #b4b4b4; }
.fan-name { flex: 1; color: #e1e1e1; }
.toggle { position: relative; width: 49px; height: 19px; border-radius: 10px; background: #5a5a5a; margin-top: 3px; }
.toggle i { position: absolute; top: -4px; left: 0; width: 27.5px; height: 27.5px; border-radius: 50%; background: #b4b4b4; box-shadow: 0 1px 3px rgba(0,0,0,.5); }
.toggle.on { background: #6f6f6f; }
.toggle.on i { left: auto; right: 0; background: #5e9fda; }
.chevron { margin: 3px -6.5px 0 -25px; color: #e1e1e1; }
.fan-btns { display: flex; justify-content: center; gap: 12px; margin-top: 21.5px; padding-left: 1px; }
.pill { display: flex; align-items: center; gap: 5px; height: 43px; padding: 0 16.5px 0 10px; border: none; border-radius: 22px; background: #3f3f3f; color: #e1e1e1; font: 400 17px Roboto, sans-serif; letter-spacing: .2px; }
.pill svg { width: 26px; height: 26px; color: #b4b4b4; }
.pager { display: flex; justify-content: center; gap: 10.5px; margin-top: 13.5px; }
.pager i { width: 11px; height: 11px; border-radius: 50%; background: #171717; }
.pager i.cur { background: #5e9fda; }

/* runtime chart */
.col-right { align-items: center; }
.runtime { width: 796px; height: 608px; padding-top: 12px; }
.runtime .card-title { padding-left: 22px; }
.chart { margin-top: 11px; }
.grid line { stroke: #e8e8e8; stroke-width: 1.5; stroke-dasharray: 4 3; }
.axis { stroke: #c8c8c8; stroke-width: 1.5; fill: none; }
.bars line { stroke: #0000ff; stroke-width: 4; }
.target { stroke: #2f78a8; stroke-width: 1.5; }
.indoor { stroke: #c90fa5; stroke-width: 4; stroke-linejoin: round; }
.outdoor { stroke: #e8a000; stroke-width: 2; stroke-linejoin: round; }
.tick-l text { font-size: 16.5px; fill: #d0d0d0; text-anchor: middle; }
.tick-l text.strong { font-weight: 700; }
.ax-title { font: 700 16.5px "Liberation Sans", sans-serif; letter-spacing: .6px; fill: #e8e8e8; text-anchor: middle; }
.tag rect { stroke: #fff; stroke-width: 1.2; }
.tag text { font-size: 16.5px; font-weight: 700; fill: #fff; text-anchor: middle; }
.tag.cool rect { fill: #0000e6; }
.tag.heat rect { fill: #80392b; }
.legend { display: flex; justify-content: center; gap: 27px; line-height: 22px; font-size: 16.5px; margin-top: 9px; }
.legend b { font-weight: 700; }
.lg { display: flex; align-items: center; white-space: pre; }
.sw { width: 16px; height: 16px; border-radius: 50%; margin-right: 4px; }
.s-indoor { background: #c90fa5; }
.s-target { background: #3498db; }
.s-outdoor { background: #e74c3c; }
.s-cool { background: #0000ff; }
.s-heat { background: #8b3a1e; }
.runtime .pager { margin-top: 3.5px; }

/* stat tiles */
.stats { width: 100%; display: grid; grid-template-columns: 396px 397px; justify-content: space-between; gap: 8.5px 9px; margin-top: 12px; }
.stat { height: 130px; display: flex; justify-content: space-between; padding: 22px 20px 0 22px; color: #aeaeae; }
.stat .card-title { margin-top: 3px; }
.stat-val { font-size: 38.5px; line-height: 46px; margin-top: 3px; color: #e1e1e1; }
.stat-val span { font-size: 22px; color: #aeaeae; margin-left: 12px; }
```
